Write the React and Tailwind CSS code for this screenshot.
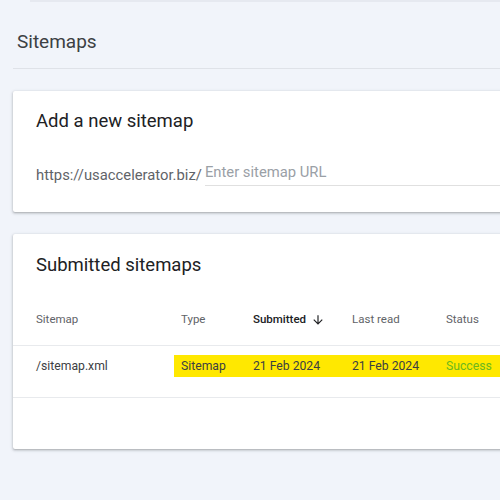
const COLS = 'grid grid-cols-[138px_72px_99px_94px_1fr] pl-[23px]'

const ROWS = [
  { sitemap: '/sitemap.xml', type: 'Sitemap', submitted: '21 Feb 2024', lastRead: '21 Feb 2024', status: 'Success' },
]

const ArrowDown = () => (
  <svg width="14" height="14" viewBox="0 0 24 24" className="ml-[5px]" fill="#202124">
    <path d="M20 12l-1.41-1.41L13 16.17V4h-2v12.17l-5.58-5.59L4 12l8 8 8-8z" />
  </svg>
)

export default function App() {
  return (
    <div className="w-[500px] h-[500px] overflow-hidden bg-[#f1f4fa] font-['Roboto',sans-serif] text-[#202124]">
      <div className="ml-[30px] h-[2px] w-[520px] bg-[#e6e9f0]" />

      <div className="ml-[13px] w-[520px] h-[67px] border-b border-[#dfe2e8] pl-[4px] pt-[28px]">
        <h1 className="text-[19px] leading-[24px] text-[#3c4043]">Sitemaps</h1>
      </div>

      <div className="ml-[13px] mt-[22px] w-[520px] h-[121px] bg-white rounded-[2px] shadow-[0_1px_2px_rgba(60,64,67,0.3),0_1px_3px_1px_rgba(60,64,67,0.12)] pl-[23px] pt-[18px]">
        <h2 className="text-[18.5px] leading-[24px] text-[#202124]">Add a new sitemap</h2>
        <div className="flex items-end mt-[27px]">
          <span className="text-[14.8px] leading-[20px] pb-[1px] text-[#5f6368]">https://usaccelerator.biz/</span>
          <div className="flex-1 ml-[3px] border-b border-[#e0e0e0] pb-[1px]">
            <span className="text-[14.8px] leading-[20px] text-[#9aa0a6]">Enter sitemap URL</span>
          </div>
        </div>
      </div>

      <div className="ml-[13px] mt-[22px] w-[520px] h-[215px] bg-white rounded-[2px] shadow-[0_1px_2px_rgba(60,64,67,0.3),0_1px_3px_1px_rgba(60,64,67,0.12)] pt-[19px]">
        <h2 className="pl-[23px] text-[18.5px] leading-[24px] text-[#202124]">Submitted sitemaps</h2>

        <div className={`${COLS} mt-[17px] h-[52px] items-center border-b border-[#e8eaed] text-[11.5px] text-[#5f6368]`}>
          <div>Sitemap</div>
          <div className="pl-[7px]">Type</div>
          <div className="pl-[7px] flex items-center font-medium text-[#202124]">
            Submitted
            <ArrowDown />
          </div>
          <div className="pl-[7px]">Last read</div>
          <div className="pl-[7px]">Status</div>
        </div>

        {ROWS.map((r) => (
          <div key={r.sitemap} className={`${COLS} h-[52px] items-start pt-[9px] border-b border-[#e8eaed] text-[12.2px]`}>
            <div className="h-[22px] flex items-center text-[#3c4043]">{r.sitemap}</div>
            <div className="pl-[7px] h-[22px] flex items-center bg-[#ffe800] text-[#3c4043]">{r.type}</div>
            <div className="pl-[7px] h-[22px] flex items-center bg-[#ffe800] text-[#3c4043]">{r.submitted}</div>
            <div className="pl-[7px] h-[22px] flex items-center bg-[#ffe800] text-[#3c4043]">{r.lastRead}</div>
            <div className="pl-[7px] h-[22px] flex items-center bg-[#ffe800] text-[#6cb81e]">{r.status}</div>
          </div>
        ))}
      </div>
    </div>
  )
}
